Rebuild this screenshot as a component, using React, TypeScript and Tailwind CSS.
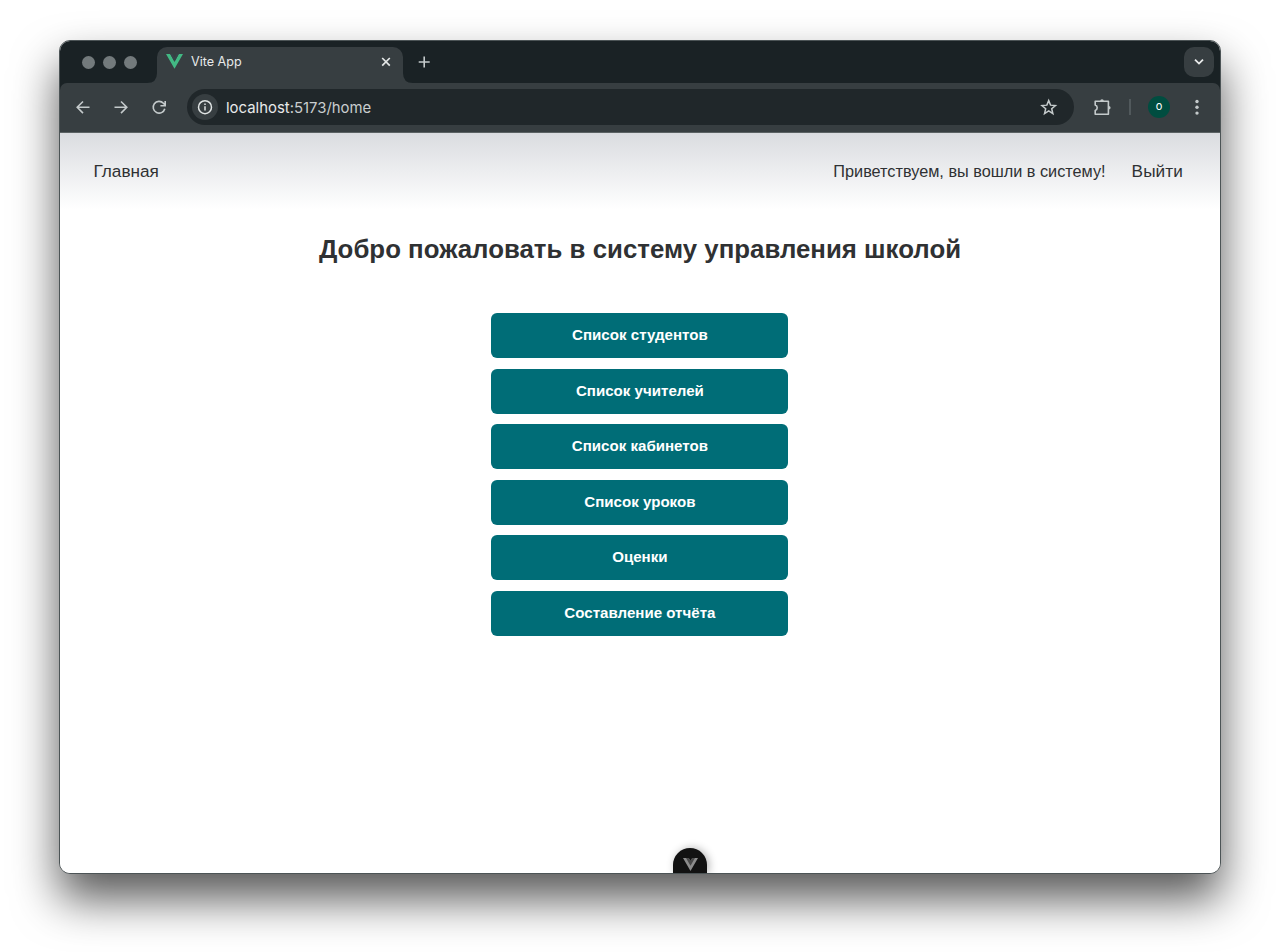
import type { ReactNode } from 'react';

const links = [
  'Список студентов',
  'Список учителей',
  'Список кабинетов',
  'Список уроков',
  'Оценки',
  'Составление отчёта',
];

function VueMark({ outer, inner, className }: { outer: string; inner: string; className: string }) {
  return (
    <svg viewBox="0 0 262 227" className={className}>
      <path fill={outer} d="M161.1 0l-30.2 52.4L100.6 0H0l130.9 226.7L261.7 0z" />
      <path fill={inner} d="M161.1 0l-30.2 52.4L100.6 0H52.3l78.6 136L209.4 0z" />
    </svg>
  );
}

function Icon({ className, width = 1.6, children }: { className: string; width?: number; children: ReactNode }) {
  return (
    <svg viewBox="0 0 20 20" fill="none" stroke="currentColor" strokeWidth={width} className={`h-5 w-5 shrink-0 ${className}`}>
      {children}
    </svg>
  );
}

function TabStrip() {
  return (
    <div className="flex h-[42px] items-start bg-[#1a2225] pr-[6px]">
      <div className="flex gap-[8px] pt-[14.5px] pl-[21.5px]">
        <span className="h-[13px] w-[13px] rounded-full bg-[#737a7c]" />
        <span className="h-[13px] w-[13px] rounded-full bg-[#737a7c]" />
        <span className="h-[13px] w-[13px] rounded-full bg-[#737a7c]" />
      </div>
      <div className="mt-[6px] ml-[10.5px] flex h-[36px]">
        <svg viewBox="0 0 10 36" className="h-[36px] w-[10px]">
          <path d="M10 26Q10 36 0 36H10z" fill="#373e41" />
        </svg>
        <div className="flex w-[246px] items-start rounded-t-[10px] bg-[#373e41] pt-[5px] pr-[7px] pl-[9px]">
          <svg viewBox="0 0 17 15" className="mt-[2px] h-[15px] w-[17px]">
            <path d="M0 0h4.2l4.3 7.8L12.8 0H17L8.5 14.8z" fill="#42b883" />
            <path d="M4.2 0h2.3l2 3.4 2-3.4h2.3L8.5 7.8z" fill="#374449" />
          </svg>
          <span className="ml-[8px] font-['Inter',sans-serif] text-[12.6px] leading-[20px] text-[#e8eaea]">Vite App</span>
          <Icon className="ml-auto text-[#e3e6e6]" width={1.7}>
            <path d="M6.2 6l7.6 7.6M13.8 6l-7.6 7.6" />
          </Icon>
        </div>
        <svg viewBox="0 0 10 36" className="h-[36px] w-[10px]">
          <path d="M0 26Q0 36 10 36H0z" fill="#373e41" />
        </svg>
      </div>
      <Icon className="mt-[11px] ml-px text-[#c4cacb]" width={1.6}>
        <path d="M10.2 4.5v11M4.7 10h11" />
      </Icon>
      <div className="mt-[6px] ml-auto flex h-[30px] w-[30px] items-center justify-center rounded-[10px] bg-[#373e41] text-[#e8eaea]">
        <Icon className="" width={1.8}>
          <path d="M6 7.6l4 4 4-4" />
        </Icon>
      </div>
    </div>
  );
}

function Toolbar() {
  return (
    <div className="bg-[#1a2225]">
      <div className="flex h-[50px] items-center rounded-t-[7px] border-b border-[#5b6264] bg-[#373e41] pb-px pl-[13px] text-[#c4cacb]">
        <Icon className="">
          <path d="M16.5 10.3H4.3M10 4.5l-5.8 5.8 5.8 5.8" />
        </Icon>
        <Icon className="ml-[18px]">
          <path d="M3.5 10.3h12.2M10 4.5l5.8 5.8-5.8 5.8" />
        </Icon>
        <Icon className="ml-[18px]">
          <path d="M15.8 11.8A5.9 5.9 0 1 1 14.4 6.2L16 7.9M16.2 3.9v4.8h-4.8" />
        </Icon>
        <div className="ml-[18px] flex h-[36px] w-[887px] items-center rounded-full bg-[#20272a] pr-[15px] pl-[5px]">
          <span className="flex h-[26px] w-[26px] items-center justify-center rounded-full bg-[#373e41] text-[#dfe3e3]">
            <Icon className="" width={1.5}>
              <circle cx="10" cy="10.2" r="6.5" />
              <path d="M10 9.2v4.3M10 6.6v1.5" />
            </Icon>
          </span>
          <span className="ml-[8px] pt-px font-['Inter',sans-serif] text-[14.9px] leading-[20px] text-[#c9cdce]">
            <span className="text-[#e8eaea]">localhost</span>:5173/home
          </span>
          <Icon className="ml-auto" width={1.5}>
            <path d="M9.7 3.6l1.85 4.55 4.9.4-3.75 3.2 1.15 4.8-4.15-2.6-4.15 2.6 1.15-4.8-3.75-3.2 4.9-.4z" />
          </Icon>
        </div>
        <Icon className="ml-[18px]">
          <path d="M3.2 4.3h13.2v13H3.2v-3.7c1.5-.5 2-1.6 2-2.8s-.5-2.3-2-2.8z" strokeLinejoin="round" />
          <path d="M8.2 4a1.8 1.8 0 0 1 3.6 0zM16.8 9a1.8 1.8 0 0 1 0 3.6z" fill="currentColor" stroke="none" />
        </Icon>
        <span className="ml-[17px] h-[16px] w-[2px] bg-[#51595c]" />
        <span className="ml-[17px] flex h-[22px] w-[22px] items-center justify-center rounded-full bg-[#004d40] pb-px font-['Inter',sans-serif] text-[11px] leading-none text-white">
          o
        </span>
        <svg viewBox="0 0 20 20" className="ml-[17px] h-5 w-5" fill="currentColor">
          <circle cx="10" cy="4.5" r="1.7" />
          <circle cx="10" cy="10.3" r="1.7" />
          <circle cx="10" cy="16.1" r="1.7" />
        </svg>
      </div>
    </div>
  );
}

function Page() {
  return (
    <div className="flex min-h-0 flex-1 flex-col bg-white font-['Liberation_Sans',Arial,sans-serif] text-[#2f3133]">
      <header className="flex h-[76px] shrink-0 items-center bg-linear-to-b from-[#dadce0] to-white pr-[37px] pb-px pl-[33.5px] text-[17.2px] leading-[24px]">
        <span>Главная</span>
        <span className="ml-auto text-[16.25px]">Приветствуем, вы вошли в систему!</span>
        <span className="ml-[26px] tracking-[0.1px]">Выйти</span>
      </header>
      <h1 className="mt-[23px] text-center text-[25.8px] leading-[34px] font-bold tracking-[0.02px]">
        Добро пожаловать в систему управления школой
      </h1>
      <nav className="mt-[47px] ml-[431.4px] flex w-[297px] flex-col gap-[10.5px]">
        {links.map((label) => (
          <a
            key={label}
            className="flex h-[45px] items-center justify-center rounded-[6px] bg-[#006d77] text-[15.1px] font-bold text-white"
          >
            {label}
          </a>
        ))}
      </nav>
      <div className="mt-auto ml-[613px] flex h-[25px] w-[34px] justify-center rounded-t-[17px] bg-[#121212] pt-[10px] shadow-[2px_0_8px_rgba(0,0,0,0.3)]">
        <VueMark outer="#8c8c8c" inner="#4a4a4a" className="h-[13px] w-[15px]" />
      </div>
    </div>
  );
}

export default function App() {
  return (
    <div className="h-[952px] w-[1280px] overflow-hidden bg-white pt-[40px] pl-[59px]">
      <div className="flex h-[834px] w-[1162px] flex-col overflow-hidden rounded-[11px] border border-[#4c5456] bg-white shadow-[0_25px_46px_rgba(0,0,0,0.66)]">
        <TabStrip />
        <Toolbar />
        <Page />
      </div>
    </div>
  );
}
